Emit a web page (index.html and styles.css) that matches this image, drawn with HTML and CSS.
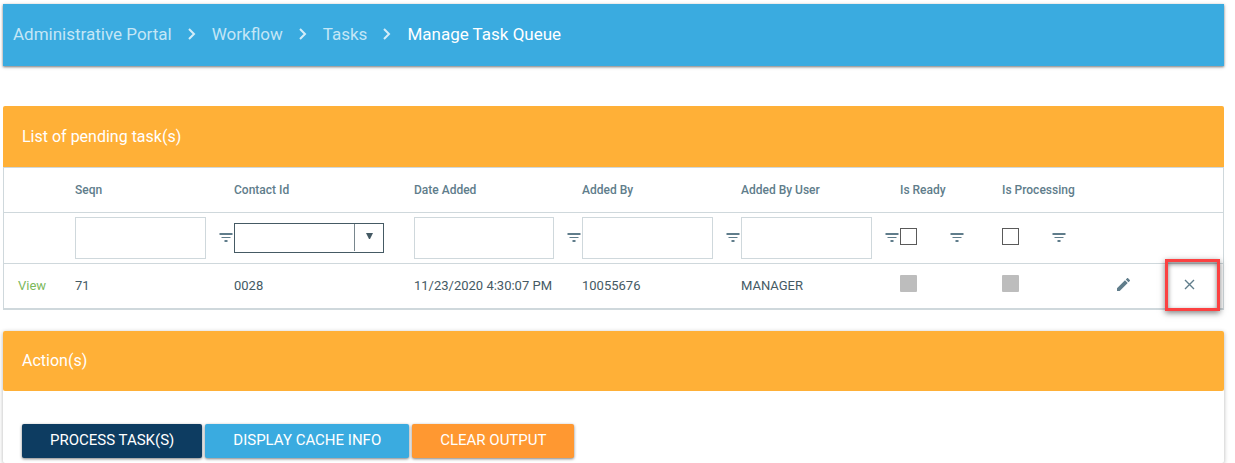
FILE: index.html
```html
<!DOCTYPE html>
<html lang="en">

<head>
    <meta charset="UTF-8">
    <meta name="viewport" content="width=device-width, initial-scale=1.0">
    <title>Manage Task Queue</title>
    <link rel="stylesheet" href="styles.css">
</head>

<body>
    <!-- shared icons -->
    <svg class="sprite" aria-hidden="true">
        <symbol id="chevron" viewBox="0 0 8 12">
            <path d="M1 1l5 5-5 5" fill="none" stroke="currentColor" stroke-width="2" />
        </symbol>
        <symbol id="filter" viewBox="0 0 14 10">
            <path d="M0 0h13v2H0zM2 4h9v1H2zM5 7h3v2H5z" fill="currentColor" />
        </symbol>
    </svg>

    <nav class="breadcrumb" aria-label="Breadcrumb">
        <a href="#">Administrative Portal</a>
        <svg class="chevron"><use href="#chevron" /></svg>
        <a href="#">Workflow</a>
        <svg class="chevron"><use href="#chevron" /></svg>
        <a href="#">Tasks</a>
        <svg class="chevron"><use href="#chevron" /></svg>
        <a href="#" class="current">Manage Task Queue</a>
    </nav>

    <section class="tasks">
        <h2 class="title">List of pending task(s)</h2>
        <table class="grid">
            <colgroup>
                <col class="c-view">
                <col class="c-text">
                <col class="c-contact">
                <col class="c-date">
                <col class="c-text">
                <col class="c-text">
                <col class="c-check">
                <col class="c-check">
                <col class="c-edit">
                <col>
            </colgroup>
            <thead>
                <tr class="heads">
                    <th></th>
                    <th>Seqn</th>
                    <th>Contact Id</th>
                    <th>Date Added</th>
                    <th>Added By</th>
                    <th>Added By User</th>
                    <th>Is Ready</th>
                    <th>Is Processing</th>
                    <th></th>
                    <th></th>
                </tr>
                <tr class="filters">
                    <td></td>
                    <td>
                        <div class="filter">
                            <input type="text" aria-label="Filter Seqn">
                            <button type="button" aria-label="Seqn filter options"><svg><use href="#filter" /></svg></button>
                        </div>
                    </td>
                    <td>
                        <div class="combo">
                            <select aria-label="Filter Contact Id"><option></option></select>
                            <svg class="arrow" viewBox="0 0 8 6"><path d="M0 0h7L4 6H3z" fill="currentColor" /></svg>
                        </div>
                    </td>
                    <td>
                        <div class="filter">
                            <input type="text" aria-label="Filter Date Added">
                            <button type="button" aria-label="Date Added filter options"><svg><use href="#filter" /></svg></button>
                        </div>
                    </td>
                    <td>
                        <div class="filter">
                            <input type="text" aria-label="Filter Added By">
                            <button type="button" aria-label="Added By filter options"><svg><use href="#filter" /></svg></button>
                        </div>
                    </td>
                    <td>
                        <div class="filter">
                            <input type="text" aria-label="Filter Added By User">
                            <button type="button" aria-label="Added By User filter options"><svg><use href="#filter" /></svg></button>
                        </div>
                    </td>
                    <td>
                        <div class="filter check">
                            <input type="checkbox" aria-label="Filter Is Ready">
                            <button type="button" aria-label="Is Ready filter options"><svg><use href="#filter" /></svg></button>
                        </div>
                    </td>
                    <td>
                        <div class="filter check">
                            <input type="checkbox" aria-label="Filter Is Processing">
                            <button type="button" aria-label="Is Processing filter options"><svg><use href="#filter" /></svg></button>
                        </div>
                    </td>
                    <td></td>
                    <td></td>
                </tr>
            </thead>
            <tbody>
                <tr>
                    <td class="view"><a href="#">View</a></td>
                    <td>71</td>
                    <td>0028</td>
                    <td>11/23/2020 4:30:07 PM</td>
                    <td>10055676</td>
                    <td>MANAGER</td>
                    <td><input type="checkbox" aria-label="Is Ready" disabled></td>
                    <td><input type="checkbox" aria-label="Is Processing" disabled></td>
                    <td class="icon">
                        <button type="button" aria-label="Edit">
                            <svg viewBox="3 3 18 18" width="13" height="13"><path fill="currentColor" d="M3 17.25V21h3.75L17.81 9.94l-3.75-3.75L3 17.25zM20.71 7.04c.39-.39.39-1.02 0-1.41l-2.34-2.34c-.39-.39-1.02-.39-1.41 0l-1.83 1.83 3.75 3.75 1.83-1.83z" /></svg>
                        </button>
                    </td>
                    <td class="icon delete">
                        <button type="button" aria-label="Delete">
                            <svg viewBox="0 0 11 11" width="11" height="11"><path fill="none" stroke="currentColor" stroke-width="1.4" d="M1 1l9 9M10 1l-9 9" /></svg>
                        </button>
                    </td>
                </tr>
            </tbody>
        </table>
    </section>

    <section class="actions">
        <h2 class="title">Action(s)</h2>
        <div class="buttons">
            <button type="button" class="btn navy">PROCESS TASK(S)</button>
            <button type="button" class="btn blue">DISPLAY CACHE INFO</button>
            <button type="button" class="btn orange">CLEAR OUTPUT</button>
        </div>
    </section>
</body>

</html>
```
FILE: styles.css
```css
*,
*::after {
    box-sizing: border-box;
}

body {
    margin: 0;
    padding: 4px 11px 0 3px;
    background: #fff;
    color: #455a64;
    font-family: Roboto, "Liberation Sans", sans-serif;
    font-size: 13px;
}

a {
    text-decoration: none;
}

.sprite {
    display: none;
}

/* breadcrumb bar */
.breadcrumb {
    display: flex;
    align-items: center;
    gap: 16px;
    height: 62px;
    padding: 0 10px 2px;
    background: #3aabe0;
    font-size: 17px;
    box-shadow: 0 1px 2px rgba(0, 0, 0, .4), 0 1px 4px rgba(0, 0, 0, .2);
}

.breadcrumb a {
    color: #c4e6f6;
}

.breadcrumb .current {
    color: #fff;
}

.chevron {
    width: 8px;
    height: 12px;
    color: #d4edf8;
}

.title {
    margin: 0;
    padding: 0 19px;
    background: #ffb037;
    border-radius: 2px;
    color: #fff;
    font-size: 16px;
    font-weight: 400;
    line-height: 60px;
}

/* task list */
.tasks {
    margin-top: 40px;
}

.tasks .title {
    padding-top: 1px;
    border-radius: 2px 2px 0 0;
}

.grid {
    width: 100%;
    table-layout: fixed;
    border: 1px solid #cfd8dc;
    border-bottom-width: 2px;
    border-spacing: 0;
}

.c-view {
    width: 71px;
}

.c-text {
    width: 159px;
}

.c-contact {
    width: 180px;
}

.c-date {
    width: 168px;
}

.c-check {
    width: 102px;
}

.c-edit {
    width: 60px;
}

.grid th,
.grid td {
    padding: 0;
    text-align: left;
    white-space: nowrap;
}

.grid th {
    height: 45px;
    border-bottom: 1px solid #cfd8dc;
    color: #607d8b;
    font-size: 12px;
    font-weight: 500;
}

.grid td {
    height: 44px;
    padding-bottom: 2px;
}

.grid .filters td {
    height: 51px;
    padding-bottom: 0;
    border-bottom: 1px solid #cfd8dc;
}

.grid .view {
    padding-left: 14px;
}

.view a {
    color: #7cb95c;
}

.filter {
    display: flex;
    align-items: center;
    gap: 13px;
}

.filter input[type="text"] {
    flex: 1;
    min-width: 0;
    height: 42px;
    padding: 0 8px;
    border: 1px solid #cfd8dc;
    background: #fff;
}

.grid button {
    display: block;
    padding: 0;
    border: 0;
    background: none;
    color: #607d8b;
    cursor: pointer;
}

.filter svg {
    display: block;
    width: 15px;
    height: 10px;
}

.filter.check {
    gap: 33px;
}

.combo {
    display: grid;
    align-items: center;
    width: 150px;
}

.combo select,
.combo .arrow {
    grid-area: 1 / 1;
}

.combo select {
    height: 30px;
    border: 1px solid #455a64;
    border-radius: 0;
    background: linear-gradient(#78868d, #78868d) right 28px top / 1px 27px no-repeat #fff;
    appearance: none;
}

.combo .arrow {
    justify-self: end;
    width: 8px;
    height: 6px;
    margin: 0 10px 4px 0;
    color: #455a64;
    pointer-events: none;
}

.grid input[type="checkbox"] {
    display: block;
    width: 17px;
    height: 17px;
    margin: 0 0 4px;
    border: 1px solid #5a5a5a;
    background: #fff;
    appearance: none;
}

.grid input[type="checkbox"]:disabled {
    border: 0;
    border-radius: 1px;
    background: #bdbdbd;
}

.grid .icon {
    padding-left: 13px;
    padding-bottom: 4px;
}

.icon svg {
    display: block;
}

.grid .delete {
    position: relative;
    padding-left: 20px;
}

/* highlight around the delete button */
.delete::after {
    content: "";
    position: absolute;
    top: -5px;
    right: 3px;
    width: 55px;
    height: 52px;
    border: 3px solid #fb4141;
    box-shadow: 0 2px 6px rgba(0, 0, 0, .5), inset 0 2px 5px rgba(0, 0, 0, .5);
    pointer-events: none;
}

/* actions */
.actions {
    margin-top: 21px;
    border-radius: 2px;
    box-shadow: 0 1px 4px rgba(0, 0, 0, .3);
}

.buttons {
    display: flex;
    gap: 3px;
    padding: 33px 19px 5px;
}

.btn {
    height: 34px;
    padding: 0 28px 2px;
    border: 0;
    border-radius: 2px;
    color: #fff;
    font-family: inherit;
    font-size: 15px;
    box-shadow: 0 1px 3px rgba(0, 0, 0, .5);
    cursor: pointer;
}

.navy {
    background: #0d3c61;
}

.blue {
    background: #3aabe0;
}

.orange {
    background: #ff9831;
}
```
